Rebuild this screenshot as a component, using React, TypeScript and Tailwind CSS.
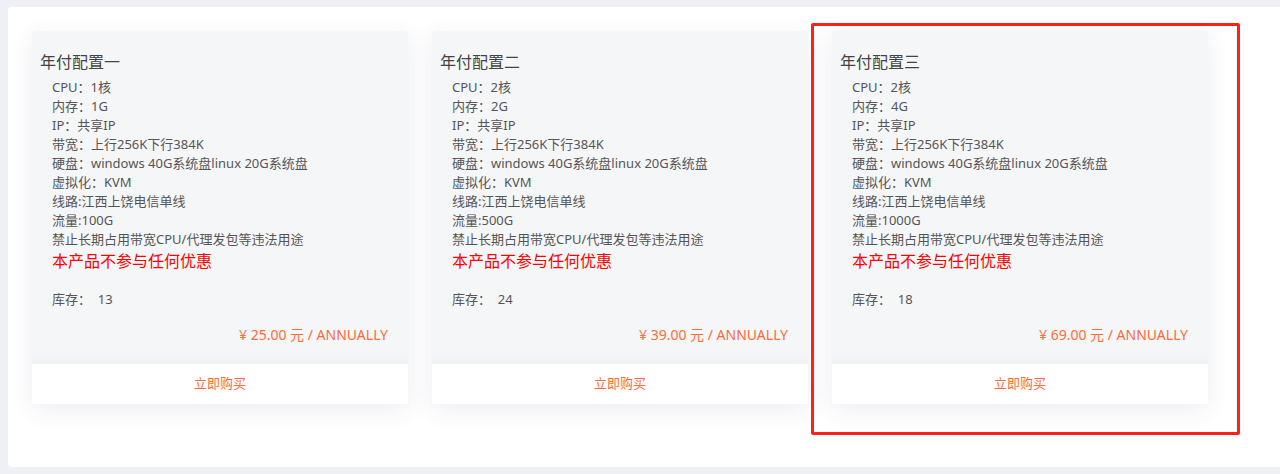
const plans = [
  { name: '年付配置一', cpu: '1核', mem: '1G', flow: '100G', stock: 13, price: '25.00' },
  { name: '年付配置二', cpu: '2核', mem: '2G', flow: '500G', stock: 24, price: '39.00' },
  { name: '年付配置三', cpu: '2核', mem: '4G', flow: '1000G', stock: 18, price: '69.00' },
];

const font = { fontFamily: '"Noto Sans", "Noto Sans CJK SC", sans-serif' };

function PlanCard({ plan }: { plan: (typeof plans)[number] }) {
  return (
    <div className="w-[376px] rounded-t-[4px] shadow-[0_6px_24px_rgba(40,60,110,0.09)]">
      <div className="bg-[#f5f6f8] rounded-t-[4px] pt-[19px] pb-[19px] pl-2 pr-5 shadow-[inset_0_-12px_12px_-10px_rgba(190,198,220,0.18)]">
        <div className="text-[16px] leading-6 text-[#444]">{plan.name}</div>
        <div className="mt-1 pl-3 text-[13px] leading-[19px] text-[#555]">
          <div>CPU：{plan.cpu}</div>
          <div>内存：{plan.mem}</div>
          <div>IP：共享IP</div>
          <div>带宽：上行256K下行384K</div>
          <div>硬盘：windows 40G系统盘linux 20G系统盘</div>
          <div>虚拟化：KVM</div>
          <div>线路:江西上饶电信单线</div>
          <div>流量:{plan.flow}</div>
          <div>禁止长期占用带宽CPU/代理发包等违法用途</div>
          <div className="text-[16px] leading-6 text-[#ff0000]">本产品不参与任何优惠</div>
          <div className="mt-[17px]">库存：&nbsp;&nbsp;{plan.stock}</div>
        </div>
        <div className="mt-[16px] text-right text-[14px] leading-5 text-[#ff6a3a]">
          ¥ {plan.price} 元 / ANNUALLY
        </div>
      </div>
      <div className="h-10 bg-white flex items-center justify-center text-[13px] text-[#ff6a3a] cursor-pointer">
        立即购买
      </div>
    </div>
  );
}

export default function App() {
  return (
    <div className="w-[1280px] h-[474px] bg-[#eef0f5] pt-[7px] pl-2 overflow-hidden" style={font}>
      <div className="relative h-[460px] bg-white rounded-l-[4px] pt-6 pl-6 flex items-start gap-6">
        {plans.map((p) => (
          <PlanCard key={p.name} plan={p} />
        ))}
        {/* 红色标注框 */}
        <div className="absolute left-[803px] top-4 w-[429px] h-[412px] border-[3px] border-[#ff2118] rounded-[2px] pointer-events-none" />
      </div>
    </div>
  );
}
